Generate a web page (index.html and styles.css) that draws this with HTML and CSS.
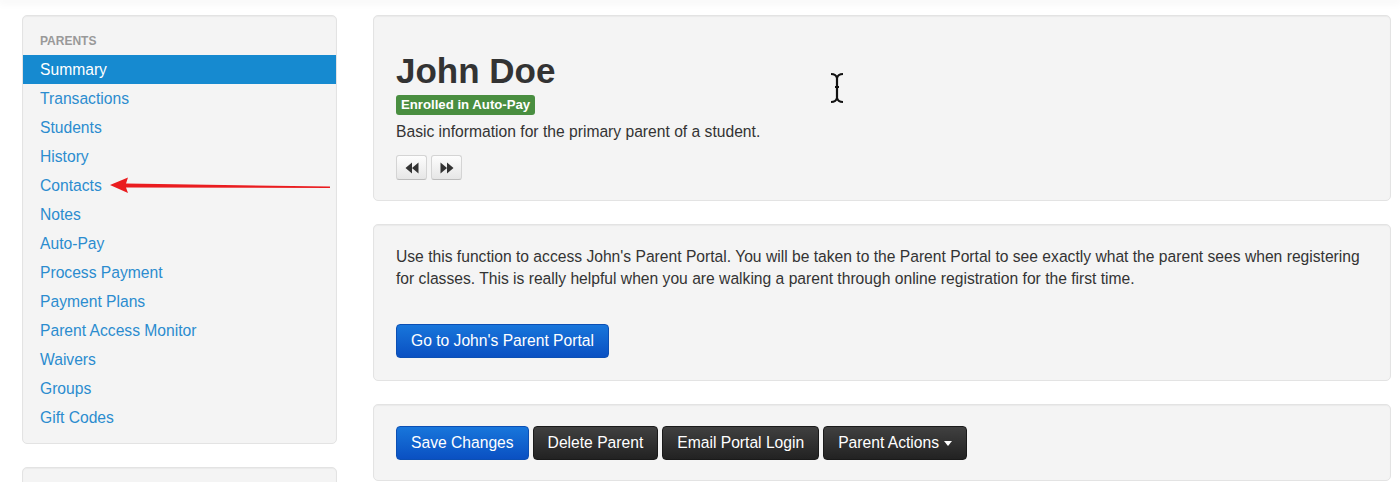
FILE: index.html
```html
<!DOCTYPE html>
<html>
<head>
  <link rel="stylesheet" href="styles.css">
</head>
<body>
  <div class="topshade"></div>
  <div class="page">
    <div class="sidebar">
      <div class="well nav-well">
        <div class="nav-header">Parents</div>
        <a class="nav-item active">Summary</a>
        <a class="nav-item">Transactions</a>
        <a class="nav-item">Students</a>
        <a class="nav-item">History</a>
        <a class="nav-item">Contacts</a>
        <a class="nav-item">Notes</a>
        <a class="nav-item">Auto-Pay</a>
        <a class="nav-item">Process Payment</a>
        <a class="nav-item">Payment Plans</a>
        <a class="nav-item">Parent Access Monitor</a>
        <a class="nav-item">Waivers</a>
        <a class="nav-item">Groups</a>
        <a class="nav-item">Gift Codes</a>
      </div>
      <div class="well next-well"></div>
    </div>

    <div class="main">
      <div class="well card hero">
        <h1>John Doe</h1>
        <span class="badge">Enrolled in Auto-Pay</span>
        <p class="lead">Basic information for the primary parent of a student.</p>
        <div class="pager">
          <button class="btn-small">
            <svg width="14" height="12" viewBox="0 0 14 12"><path d="M7 0.5 L0.5 6 L7 11.5 Z M13.5 0.5 L7 6 L13.5 11.5 Z" fill="#333"/></svg>
          </button>
          <button class="btn-small">
            <svg width="14" height="12" viewBox="0 0 14 12"><path d="M0.5 0.5 L7 6 L0.5 11.5 Z M7 0.5 L13.5 6 L7 11.5 Z" fill="#333"/></svg>
          </button>
        </div>
      </div>

      <div class="well card portal">
        <p class="body-text">Use this function to access John's Parent Portal. You will be taken to the Parent Portal to see exactly what the parent sees when registering for classes. This is really helpful when you are walking a parent through online registration for the first time.</p>
        <button class="btn btn-primary">Go to John's Parent Portal</button>
      </div>

      <div class="well card actions">
        <button class="btn btn-primary">Save Changes</button>
        <button class="btn btn-dark">Delete Parent</button>
        <button class="btn btn-dark">Email Portal Login</button>
        <button class="btn btn-dark">Parent Actions <span class="caret"></span></button>
      </div>
    </div>
  </div>

  <!-- annotation arrow pointing at Contacts -->
  <svg class="arrow" width="230" height="20" viewBox="0 0 230 20">
    <path d="M0 8 L18 0.5 L16 6.5 L220 9.5 L220 11 L16 10.5 L18 16 Z" fill="#ea1c1f"/>
  </svg>

  <!-- text cursor -->
  <svg class="ibeam" width="16" height="32" viewBox="0 0 16 32">
    <path d="M2 2 Q7 2 8 6 Q9 2 14 2 M8 6 L8 26 M6 15 L10 15 M2 30 Q7 30 8 26 Q9 30 14 30" fill="none" stroke="#111" stroke-width="2.2"/>
  </svg>
</body>
</html>
```

FILE: styles.css
```css
body {
  margin: 0;
  background: #fff;
  font-family: "Liberation Sans", Arial, sans-serif;
  font-size: 15.65px;
  color: #333;
}

.topshade {
  height: 0;
  box-shadow: 0 0 10px 2px rgba(0, 0, 0, 0.07);
}

.page {
  display: flex;
  gap: 36px;
  padding: 15px 9px 0 22px;
}

.well {
  background-color: #f4f4f4;
  border: 1px solid #e3e3e3;
  border-radius: 5px;
  box-shadow: inset 0 1px 1px rgba(0, 0, 0, 0.04);
}

/* sidebar */

.sidebar {
  width: 315px;
  flex-shrink: 0;
}

.nav-well {
  padding-bottom: 11px;
}

.next-well {
  margin-top: 23px;
  height: 40px;
}

.nav-header {
  padding: 17px 17px 6px;
  line-height: 16px;
  font-size: 12px;
  font-weight: bold;
  color: #999;
  text-transform: uppercase;
}

.nav-item {
  display: block;
  height: 29px;
  line-height: 29px;
  padding-left: 17px;
  color: #2b8ccf;
  text-decoration: none;
}

.nav-item.active {
  background-color: #168ad0;
  color: #fff;
}

/* main column */

.main {
  flex: 1;
  display: flex;
  flex-direction: column;
  gap: 23px;
}

.card {
  padding: 0 22px;
}

.hero {
  padding-top: 35px;
  padding-bottom: 20px;
}

.hero h1 {
  margin: 0;
  font-size: 35px;
  line-height: 40px;
  font-weight: bold;
  color: #333;
}

.badge {
  display: inline-block;
  margin-top: 4px;
  padding: 0 5px;
  height: 20px;
  line-height: 20px;
  font-size: 13.2px;
  font-weight: bold;
  color: #fff;
  background-color: #498e40;
  border-radius: 3px;
}

.lead {
  margin: 6px 0 0;
  line-height: 22px;
}

.pager {
  display: flex;
  gap: 4px;
  margin-top: 12px;
}

.btn-small {
  width: 31px;
  height: 25px;
  padding: 0;
  display: flex;
  align-items: center;
  justify-content: center;
  border: 1px solid #d4d4d4;
  border-bottom-color: #bcbcbc;
  border-radius: 3px;
  background: linear-gradient(#fdfdfd, #e6e6e6);
}

.portal {
  padding-top: 21px;
  padding-bottom: 22px;
}

.body-text {
  margin: 0 0 34px;
  line-height: 22px;
}

.actions {
  padding-top: 21px;
  padding-bottom: 20px;
  display: flex;
  gap: 4px;
}

.btn {
  height: 34px;
  padding: 0 14px;
  font-family: inherit;
  font-size: 15.65px;
  color: #fff;
  border-radius: 4px;
  cursor: pointer;
}

.btn-primary {
  background: linear-gradient(#1876db, #0a50c2);
  border: 1px solid #0b4fb4;
}

.btn-dark {
  background: linear-gradient(#404040, #222);
  border: 1px solid #1a1a1a;
}

.caret {
  display: inline-block;
  vertical-align: middle;
  margin-left: 1px;
  border-top: 5px solid #fff;
  border-left: 4px solid transparent;
  border-right: 4px solid transparent;
}

/* overlays */

.arrow {
  position: absolute;
  left: 110px;
  top: 177px;
}

.ibeam {
  position: absolute;
  left: 829px;
  top: 72px;
}
```
